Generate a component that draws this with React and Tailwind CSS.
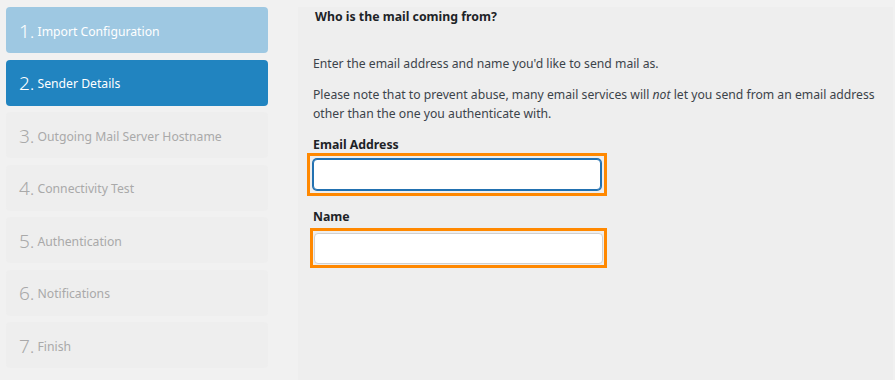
import React, { useState } from 'react';

const steps = [
    'Import Configuration',
    'Sender Details',
    'Outgoing Mail Server Hostname',
    'Connectivity Test',
    'Authentication',
    'Notifications',
    'Finish',
];

// Sidebar step: 0 = done, 1 = current, 2 = upcoming
const StepItem = ({ index, label, state }) => {
    let cls = 'bg-[#eeeeee] text-[#a9a9a9]';
    if (state === 0) cls = 'bg-[#9ec8e2] text-white';
    if (state === 1) cls = 'bg-[#2184c0] text-white';

    return (
        <div className={`h-[46px] rounded-[4px] flex items-center pl-[13px] ${cls}`}>
            <span className="text-[19px] font-light leading-none mr-[3px] relative top-[1px]">{index + 1}.</span>
            <span className="text-[12.2px] leading-none relative top-[2px]">{label}</span>
        </div>
    );
};

const App = () => {
    const [email, setEmail] = useState('');
    const [name, setName] = useState('');
    const current = 1;

    return (
        <div
            className="flex w-[895px] h-[380px] bg-[#f1f1f1] pt-[7px] pl-[6px] pr-[2px] overflow-hidden text-[#3c434a]"
            style={{ fontFamily: '"Noto Sans", "Open Sans", sans-serif' }}
        >
            {/* Steps */}
            <div className="w-[262px] flex flex-col gap-[6.5px] shrink-0">
                {steps.map((s, i) => (
                    <StepItem key={s} index={i} label={s} state={i < current ? 0 : i === current ? 1 : 2} />
                ))}
            </div>

            {/* Main panel */}
            <div className="flex-1 ml-[30px] bg-[#eeeeee] pl-[15px] pr-3">
                <h2 className="text-[12.3px] font-bold leading-[19px] text-[#1d2327] pl-[2px]">Who is the mail coming from?</h2>

                <p className="text-[12.2px] leading-[19px] mt-[28px]">
                    Enter the email address and name you'd like to send mail as.
                </p>
                <p className="text-[12.2px] leading-[19px] mt-[12px]">
                    Please note that to prevent abuse, many email services will <em>not</em> let you send from an email address other than the one you authenticate with.
                </p>

                <label className="block text-[12.3px] font-bold leading-[16px] mt-[14px] text-[#1d2327]">Email Address</label>
                <div className="w-[300px] border-[3px] border-[#ff8800] p-[3px] -ml-[6px]">
                    <input
                        type="text"
                        value={email}
                        onChange={(e) => setEmail(e.target.value)}
                        className="block w-full h-[31px] bg-white border border-[#2271b1] rounded-[4px] shadow-[0_0_0_1px_#2271b1] outline-none"
                    />
                </div>

                <label className="block text-[12.3px] font-bold leading-[16px] mt-[13px] text-[#1d2327]">Name</label>
                <div className="w-[297px] border-[3px] border-[#ff8800] pt-[2px] pb-[1px] pl-[1px] pr-[1px] mt-[3px] -ml-[3px]">
                    <input
                        type="text"
                        value={name}
                        onChange={(e) => setName(e.target.value)}
                        className="block w-full h-[31px] bg-white border border-[#d0d0d0] rounded-[4px] outline-none"
                    />
                </div>
            </div>
        </div>
    );
};

export default App;
